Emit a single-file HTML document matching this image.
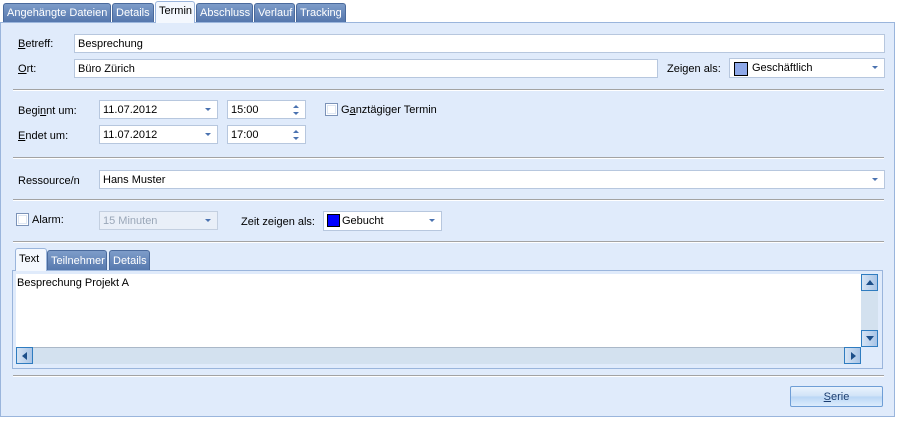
<!DOCTYPE html>
<html><head><meta charset="utf-8"><style>
*{box-sizing:border-box;margin:0;padding:0}
body{width:899px;height:421px;background:#fff;font-family:"Liberation Sans",sans-serif;font-size:11px;color:#000;position:relative;overflow:hidden}
.a{position:absolute}
.tab{position:absolute;top:3px;height:19px;background:linear-gradient(#7d9cc9,#5577ad);border:1px solid #4a6a9c;border-bottom:none;border-radius:3px 3px 0 0;color:#fff;padding:3px 0 0 3px;white-space:nowrap}
.tab.on{background:#f4f8fe;color:#000;top:1px;height:22px;border-color:#9ab5dc;z-index:2}
.panel{left:0;top:22px;width:895px;height:395px;background:#e0ebfb;border:1px solid #9ab5dc}
.in{position:absolute;background:#fff;border:1px solid #b7c7de;height:19px;padding:3px 0 0 3px;white-space:nowrap}
.sep{position:absolute;left:13px;width:871px;height:2px;border-top:1px solid #a3a3a3;border-bottom:1px solid #fff}
.dd{position:absolute;right:6px;top:7px;width:0;height:0;border-left:3px solid transparent;border-right:3px solid transparent;border-top:3px solid #4a72b0}
.cb{position:absolute;width:13px;height:13px;border:1px solid #7c93b8;background:#fff}
.cb::after{content:"";position:absolute;left:1px;top:1px;right:1px;bottom:1px;border:1px solid #dde6f3}
.itab{position:absolute;top:250px;height:21px;background:linear-gradient(#7d9cc9,#5577ad);border:1px solid #4a6a9c;border-bottom:none;border-radius:3px 3px 0 0;color:#fff;padding:4px 0 0 3px}
.sb{position:absolute;width:17px;height:17px;border:1px solid #2f7cc0;background:linear-gradient(90deg,#d6e4f4,#a9c4e6)}
</style></head><body>
<div class="tab" style="left:3px;width:108px">Angehängte Dateien</div>
<div class="tab" style="left:112px;width:42px">Details</div>
<div class="tab on" style="left:155px;width:40px">Termin</div>
<div class="tab" style="left:196px;width:57px">Abschluss</div>
<div class="tab" style="left:254px;width:41px">Verlauf</div>
<div class="tab" style="left:296px;width:50px">Tracking</div>
<div class="a panel"></div>

<div class="a" style="left:18px;top:38px"><u>B</u>etreff:</div>
<div class="in" style="left:74px;top:34px;width:811px">Besprechung</div>
<div class="a" style="left:18px;top:63px"><u>O</u>rt:</div>
<div class="in" style="left:74px;top:59px;width:584px">Büro Zürich</div>
<div class="a" style="left:667px;top:63px">Zeigen als:</div>
<div class="in" style="left:729px;top:58px;width:156px;height:20px;padding-left:22px;padding-top:3px">Geschäftlich<div class="a" style="left:4px;top:3px;width:14px;height:14px;background:#8ea8e8;border:1px solid #000"></div><div class="dd"></div></div>
<div class="sep" style="top:89px"></div>

<div class="a" style="left:18px;top:105px">Begi<u>n</u>nt um:</div>
<div class="in" style="left:99px;top:100px;width:119px">11.07.2012<div class="dd"></div></div>
<div class="in" style="left:227px;top:100px;width:79px">15:00<div class="dd" style="top:4px;border-top:none;border-bottom:3px solid #4a72b0"></div><div class="dd" style="top:11px"></div></div>
<div class="cb" style="left:325px;top:103px"></div>
<div class="a" style="left:341px;top:104px">G<u>a</u>nztägiger Termin</div>
<div class="a" style="left:18px;top:130px"><u>E</u>ndet um:</div>
<div class="in" style="left:99px;top:125px;width:119px">11.07.2012<div class="dd"></div></div>
<div class="in" style="left:227px;top:125px;width:79px">17:00<div class="dd" style="top:4px;border-top:none;border-bottom:3px solid #4a72b0"></div><div class="dd" style="top:11px"></div></div>
<div class="sep" style="top:157px"></div>

<div class="a" style="left:18px;top:175px">Ressource/n</div>
<div class="in" style="left:99px;top:170px;width:786px">Hans Muster<div class="dd"></div></div>
<div class="sep" style="top:199px"></div>

<div class="cb" style="left:16px;top:213px"></div>
<div class="a" style="left:32px;top:214px">Alarm:</div>
<div class="in" style="left:99px;top:211px;width:119px;background:#e9eff8;color:#9aa7b8;border-color:#c3cfe0">15 Minuten<div class="dd"></div></div>
<div class="a" style="left:241px;top:216px">Zeit zeigen als:</div>
<div class="in" style="left:323px;top:211px;width:119px;height:20px;padding-left:18px;padding-top:3px">Gebucht<div class="a" style="left:3px;top:2px;width:13px;height:13px;background:#0000ff;border:1px solid #000"></div><div class="dd"></div></div>
<div class="sep" style="top:241px"></div>

<div class="itab" style="left:15px;top:248px;height:23px;width:32px;background:#f4f8fe;color:#000;border-color:#9ab5dc;z-index:2">Text</div>
<div class="itab" style="left:47px;width:60px">Teilnehmer</div>
<div class="itab" style="left:109px;width:41px">Details</div>
<div class="a" style="left:12px;top:270px;width:871px;height:99px;border:1px solid #9ab5dc;background:#e0ebfb"></div>
<div class="a" style="left:16px;top:274px;width:845px;height:73px;background:#fff"></div>
<div class="a" style="left:17px;top:277px">Besprechung Projekt A</div>
<div class="a" style="left:861px;top:274px;width:17px;height:73px;background:#d3e1ef"></div>
<div class="a" style="left:16px;top:347px;width:845px;height:17px;background:#d3e1ef;border-top:1px solid #aab8c8"></div>
<div class="sb" style="left:861px;top:274px"><div class="a" style="left:4px;top:5px;border-left:4px solid transparent;border-right:4px solid transparent;border-bottom:5px solid #1d4f8a"></div></div>
<div class="sb" style="left:861px;top:330px"><div class="a" style="left:4px;top:5px;border-left:4px solid transparent;border-right:4px solid transparent;border-top:5px solid #1d4f8a"></div></div>
<div class="sb" style="left:16px;top:347px"><div class="a" style="left:5px;top:4px;border-top:4px solid transparent;border-bottom:4px solid transparent;border-right:5px solid #1d4f8a"></div></div>
<div class="sb" style="left:844px;top:347px"><div class="a" style="left:6px;top:4px;border-top:4px solid transparent;border-bottom:4px solid transparent;border-left:5px solid #1d4f8a"></div></div>
<div class="sep" style="top:375px"></div>

<div class="a" style="left:790px;top:386px;width:93px;height:21px;border:1px solid #6f9ed6;border-radius:2px;background:linear-gradient(#eaf3fd,#cfe2f7 50%,#b9d6f5 51%,#dcecfc);color:#1a3d70;text-align:center;padding-top:4px"><u>S</u>erie</div>
</body></html>
